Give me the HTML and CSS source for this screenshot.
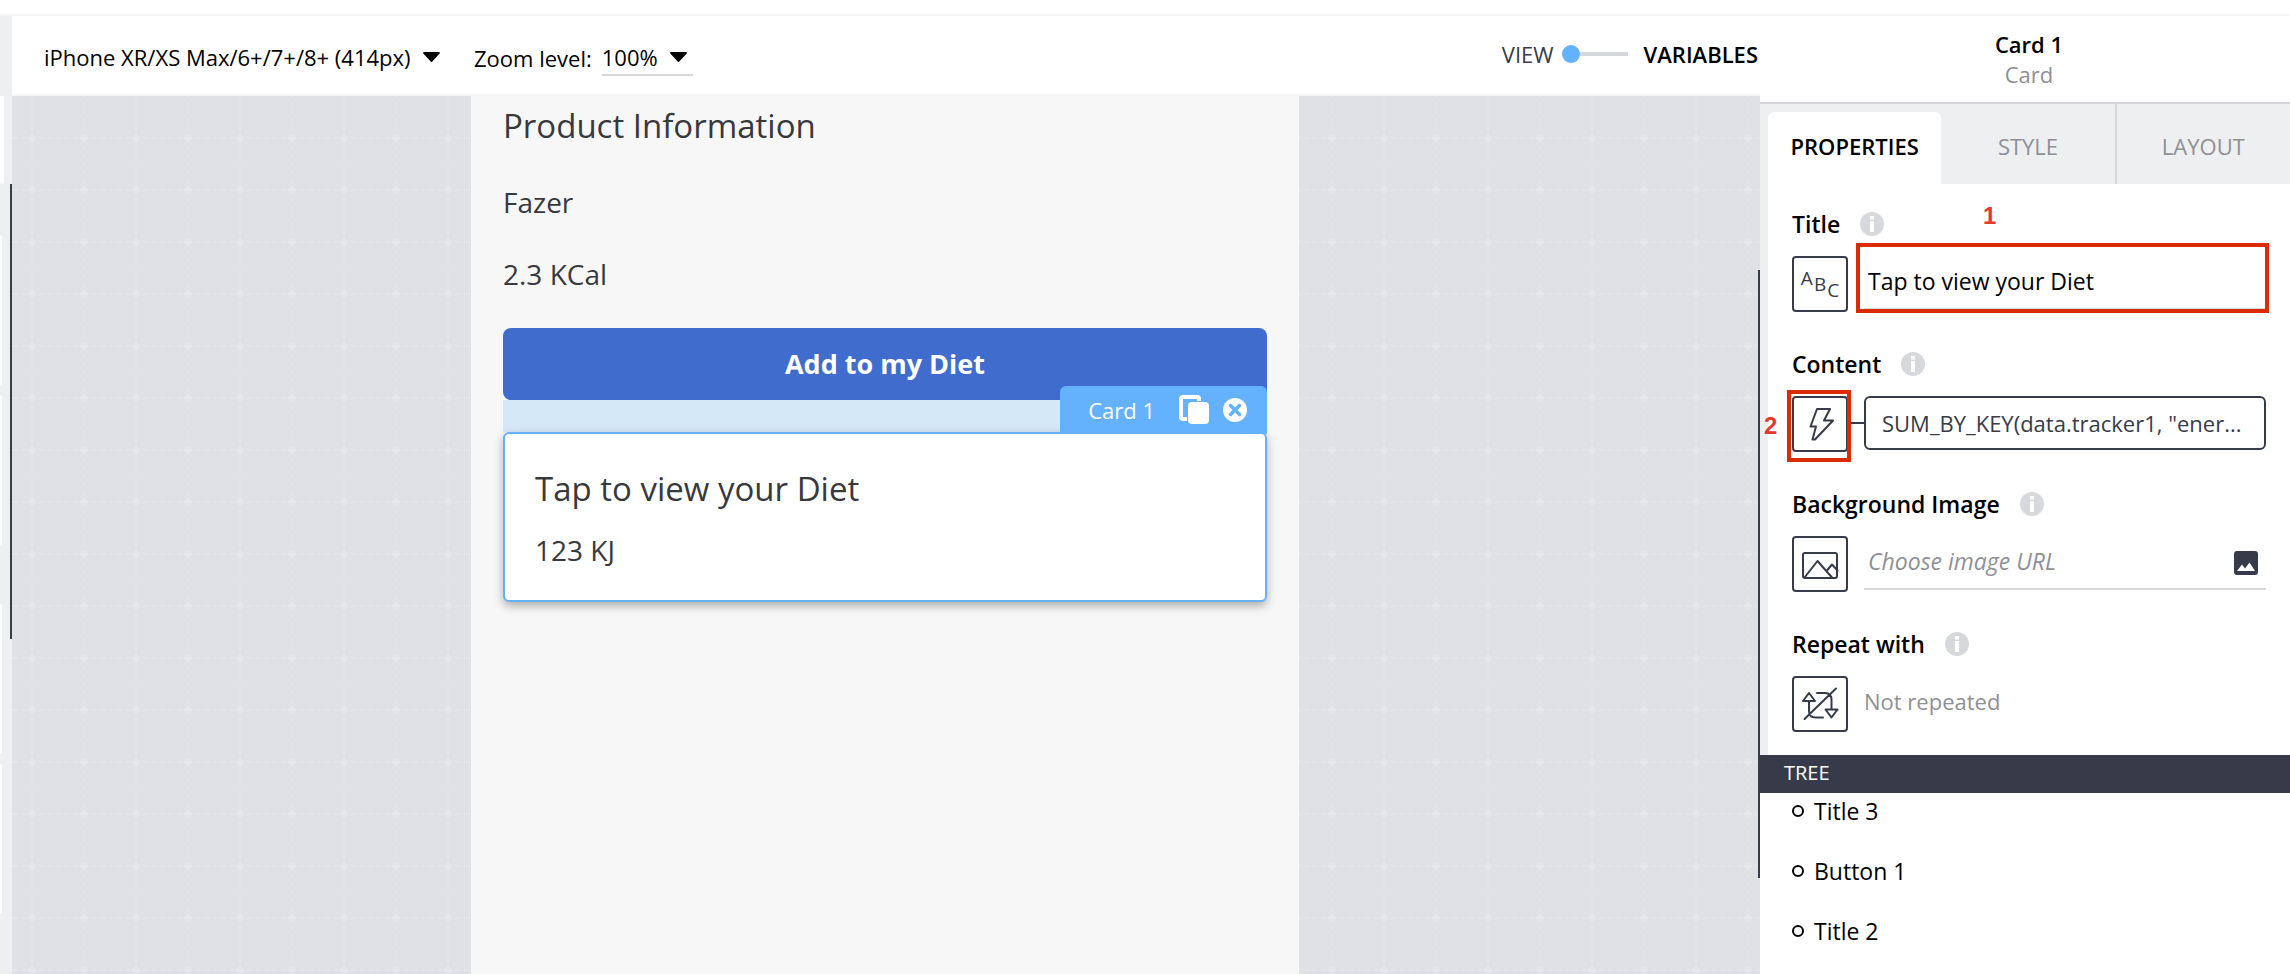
FILE: index.html
```html
<!DOCTYPE html>
<html lang="en">
<head>
<meta charset="utf-8">
<title>App builder – Card 1</title>
<link rel="stylesheet" href="styles.css">
</head>
<body>
<svg class="defs" aria-hidden="true">
  <symbol id="caret" viewBox="0 0 17 10"><path d="M1 0h15a1 1 0 0 1 .7 1.600L9.300 9.500a1 1 0 0 1-1.600 0L.3 1.600A1 1 0 0 1 1 0z"/></symbol>
  <symbol id="info" viewBox="0 0 24 24"><circle cx="12" cy="12" r="12" fill="#d6d8dc"/><path d="M10 4h4v3.500h-4zM10 9h4v11h-4z" fill="#fff"/></symbol>
</svg>
<div class="topline"></div>
<div class="builder">
  <aside class="rail" aria-label="Components">
    <div class="rail-search"></div>
    <div class="rail-list">
      <div class="rail-group"><i class="rail-card"></i><i class="rail-card"></i></div>
      <div class="rail-group"><i class="rail-card"></i><i class="rail-card"></i></div>
    </div>
    <div class="rail-handle"></div>
  </aside>

  <main class="workspace">
    <header class="toolbar">
      <div class="toolbar-left">
        <span class="picker">
          <select class="picker-select" aria-label="Device"><option>iPhone XR/XS Max/6+/7+/8+ (414px)</option></select>
          <svg class="caret"><use href="#caret"/></svg>
        </span>
        <span class="zoom">
          <label for="zoom">Zoom level:</label>
          <span class="picker picker-lined">
            <select class="picker-select" id="zoom"><option>100%</option></select>
            <svg class="caret"><use href="#caret"/></svg>
          </span>
        </span>
      </div>
      <div class="mode">
        <label class="mode-view" for="mode">VIEW</label>
        <input class="mode-switch" id="mode" type="checkbox" role="switch">
        <label class="mode-vars" for="mode">VARIABLES</label>
      </div>
    </header>
    <div class="canvas">
      <svg class="grid" aria-hidden="true">
        <defs>
          <pattern id="cell" width="52" height="52" x="-6" y="16" patternUnits="userSpaceOnUse">
            <path d="M0 26h52" stroke="#e4e5e8" stroke-width="2" stroke-dasharray="6 3" stroke-dashoffset="3"/>
            <path d="M26 0v52" stroke="#e3e4e7" stroke-width="2" stroke-dasharray="5 4" stroke-dashoffset="3"/>
            <path d="M26 22v8M22 26h8" stroke="#e6e7e9" stroke-width="3"/>
          </pattern>
        </defs>
        <rect width="100%" height="100%" fill="url(#cell)"/>
      </svg>
      <section class="phone">
        <h1 class="phone-title">Product Information</h1>
        <p class="phone-text">Fazer</p>
        <p class="phone-text">2.3 KCal</p>
        <button class="phone-button" type="button">Add to my Diet</button>
        <div class="spacer"></div>
        <article class="card">
          <div class="tag">
            <span class="tag-name">Card 1</span>
            <button class="tag-button" type="button" aria-label="Duplicate">
              <svg width="30" height="30" viewBox="0 0 30 30"><rect x="2" y="2" width="18" height="22" rx="2" fill="none" stroke="#fff" stroke-width="4"/><rect x="8" y="6" width="22" height="24" rx="4" fill="#64b1fe"/><rect x="9" y="7" width="21" height="22" rx="4" fill="#fff"/></svg>
            </button>
            <button class="tag-button" type="button" aria-label="Remove">
              <svg width="24" height="24" viewBox="0 0 24 24"><circle cx="12" cy="12" r="12" fill="#fff"/><path d="M7.500 7.500l9 9M16.500 7.500l-9 9" stroke="#64b1fe" stroke-width="3.500" stroke-linecap="round"/></svg>
            </button>
          </div>
          <h2 class="card-title">Tap to view your Diet</h2>
          <p class="card-text">123 KJ</p>
        </article>
      </section>
    </div>
  </main>

  <aside class="panel">
    <header class="panel-head">
      <strong class="panel-name">Card 1</strong>
      <span class="panel-type">Card</span>
    </header>
    <nav class="tabs">
      <button class="tab tab-active" type="button">PROPERTIES</button>
      <button class="tab" type="button">STYLE</button>
      <button class="tab tab-divided" type="button">LAYOUT</button>
    </nav>
    <div class="fields">
      <div class="field">
        <div class="field-head"><label for="f-title">Title</label><svg class="info"><use href="#info"/></svg><b class="mark mark-one">1</b></div>
        <div class="field-row">
          <button class="binding" type="button" aria-label="Text binding"><span class="abc"><span>A</span><span>B</span><span>C</span></span></button>
          <div class="frame-host">
            <input class="text-input" id="f-title" type="text" value="Tap to view your Diet">
            <i class="frame frame-input"></i>
          </div>
        </div>
      </div>
      <div class="field">
        <div class="field-head"><label for="f-content">Content</label><svg class="info"><use href="#info"/></svg></div>
        <div class="field-row field-row-linked">
          <div class="binding-host">
            <button class="binding" type="button" aria-label="Formula binding">
              <svg class="glyph" viewBox="0 0 56 56"><path d="M25 13h13l-6 11.500h9L23 43.500h-2.500L24 30.500h-5.500z"/></svg>
            </button>
            <i class="frame frame-binding"></i>
            <b class="mark mark-two">2</b>
          </div>
          <button class="formula" id="f-content" type="button">SUM_BY_KEY(data.tracker1, "ener...</button>
        </div>
      </div>
      <div class="field">
        <div class="field-head"><label for="f-image">Background Image</label><svg class="info"><use href="#info"/></svg></div>
        <div class="field-row">
          <button class="binding" type="button" aria-label="Image binding">
            <svg class="glyph" viewBox="0 0 56 56"><rect x="11" y="17" width="34" height="25" rx="2"/><path d="M12.500 41.500L25.500 25 40 41.500M34.500 35l5.500-6.500 5.500 6"/></svg>
          </button>
          <div class="image-input">
            <input class="text-input" id="f-image" type="text" placeholder="Choose image URL">
            <button class="image-pick" type="button" aria-label="Pick image">
              <svg width="24" height="24" viewBox="0 0 24 24"><rect width="24" height="24" rx="3" fill="#373b49"/><path d="M3 20l5-6.500 3 4 4.500-6L21 20z" fill="#fff"/></svg>
            </button>
          </div>
        </div>
      </div>
      <div class="field">
        <div class="field-head"><span>Repeat with</span><svg class="info"><use href="#info"/></svg></div>
        <div class="field-row">
          <button class="binding" type="button" aria-label="Repeat binding">
            <svg class="glyph" viewBox="0 0 56 56"><path d="M11 25L17 17l6 8zM17 25v10q0 6.500 6.500 6.500H31M25 17h8q6.500 0 6.500 7v9.500M33.500 33.500h12l-6 8zM12.500 43L44 12.500"/></svg>
          </button>
          <span class="muted">Not repeated</span>
        </div>
      </div>
    </div>
    <section class="tree">
      <h2 class="tree-head">TREE</h2>
      <ul class="tree-list">
        <li class="tree-item">Title 3</li>
        <li class="tree-item">Button 1</li>
        <li class="tree-item">Title 2</li>
      </ul>
    </section>
    <div class="panel-handle"></div>
  </aside>
</div>
</body>
</html>
```
FILE: styles.css
```css
*, *::before, *::after { box-sizing: border-box; }
html, body { height: 100%; }
body {
  margin: 0;
  display: flex;
  flex-direction: column;
  overflow: hidden;
  background: #fff;
  color: #000;
  font: 22px/30px "Open Sans", "Noto Sans", sans-serif;
}
h1, h2, p, ul { margin: 0; padding: 0; font-weight: 400; }
button, input, select { margin: 0; padding: 0; border: 0; background: none; color: inherit; font: inherit; }
svg { display: block; flex: none; }
.defs { position: absolute; width: 0; height: 0; }

.topline { flex: none; height: 16px; border-bottom: 2px solid #f7f7f7; }
.builder { flex: 1; min-height: 0; display: flex; }

/* component rail */
.rail { position: relative; flex: none; width: 12px; padding-top: 80px; background: #eeeff1; }
.rail-search { width: 4px; height: 88px; background: #fff; border-bottom: 2px solid #f7f7f7; }
.rail-list { display: flex; flex-direction: column; gap: 59px; padding-top: 51px; }
.rail-group { display: flex; flex-direction: column; gap: 10px; }
.rail-card { width: 2px; height: 150px; background: #fff; border-radius: 0 2px 2px 0; }
.rail-handle { position: absolute; top: 168px; right: 0; width: 2px; height: 455px; background: #373b49; }

/* toolbar */
.workspace { flex: 1; min-width: 0; display: flex; flex-direction: column; }
.toolbar {
  flex: none;
  display: flex;
  justify-content: space-between;
  align-items: center;
  height: 80px;
  padding: 0 2px 0 32px;
  border-bottom: 2px solid #f7f7f7;
}
.toolbar-left { display: flex; align-items: center; gap: 34px; padding-top: 6px; }
.picker { display: flex; align-items: center; gap: 12px; border-bottom: 2px solid transparent; }
.picker-select { appearance: none; height: 34px; outline: 0; }
.picker-lined { padding-right: 6px; border-color: #d6d7db; }
.zoom { display: flex; align-items: center; gap: 10px; }
.caret { width: 17px; height: 10px; }
.mode { display: flex; align-items: center; padding-bottom: 2px; }
.mode-view { color: #373b49; }
.mode-vars { padding-left: 16px; }
.mode-vars, .panel-name, .tab-active, .field-head { font-weight: 600; }
.mode-switch { appearance: none; display: flex; align-items: center; width: 66px; height: 18px; margin-left: 8px; }
.mode-switch::before { content: ""; width: 18px; height: 18px; border-radius: 50%; background: #64b1fe; }
.mode-switch::after { content: ""; flex: 1; height: 4px; background: #d6d7db; }

/* canvas */
.canvas { position: relative; flex: 1; min-height: 0; display: flex; justify-content: center; padding-right: 2px; background: #e0e1e5; }
.grid { position: absolute; inset: 0; width: 100%; height: 100%; }
.phone {
  position: relative;
  width: 828px;
  max-width: 100%;
  padding: 2px 32px 32px;
  background: #f7f7f7;
  color: #38393d;
  font-size: 28px;
}
.phone-title { padding-bottom: 20px; font-size: 33px; line-height: 56px; }
.phone-text { line-height: 56px; padding-bottom: 16px; }
.phone-text + .phone-text { padding-bottom: 26px; }
.phone-button { display: block; width: 100%; height: 72px; border-radius: 8px; background: #3f6ccd; color: #fff; font-size: 27px; font-weight: 700; }
.spacer { height: 32px; background: #d5e8f7; }
.card {
  position: relative;
  padding: 30px 30px 26px;
  border: 2px solid #64b1fe;
  border-radius: 6px;
  background: #fff;
  box-shadow: 0 4px 10px rgba(0, 0, 0, .3);
}
.card-title { padding-bottom: 12px; font-size: 33px; line-height: 50px; }
.card-text { line-height: 48px; }
.tag {
  position: absolute;
  right: -2px;
  bottom: 100%;
  display: flex;
  align-items: center;
  height: 48px;
  padding: 0 20px 0 28px;
  border-radius: 6px 6px 0 0;
  background: #64b1fe;
  color: #fff;
  font-size: 22px;
}
.tag-name { padding-right: 24px; }
.tag-button + .tag-button { padding-left: 14px; }

/* properties panel */
.panel { position: relative; flex: none; width: 530px; display: flex; flex-direction: column; background: #fff; }
.panel-head {
  flex: none;
  display: flex;
  flex-direction: column;
  align-items: center;
  justify-content: center;
  height: 88px;
  padding-left: 8px;
  border-bottom: 2px solid #d6d7db;
}
.panel-type, .muted { color: #8f9095; }
.tabs { flex: none; display: flex; height: 80px; padding-left: 8px; background: #eeeff1; }
.tab { flex: 1; padding-top: 4px; color: #8f9095; }
.tab-active { margin-top: 8px; padding-bottom: 8px; border-radius: 6px 6px 0 0; background: #fff; color: #000; }
.tab-divided { border-left: 2px solid #d6d7db; }
.fields {
  flex: none;
  display: flex;
  flex-direction: column;
  gap: 40px;
  padding: 28px 24px 23px;
  border-left: 8px solid #eeeff1;
}
.field { display: flex; flex-direction: column; gap: 20px; }
.field-head { position: relative; display: flex; align-items: center; gap: 20px; height: 24px; font-size: 23px; }
.info { width: 24px; height: 24px; }
.field-row { display: flex; gap: 16px; height: 56px; }
.binding { flex: none; display: block; width: 56px; height: 56px; border: 2px solid #373b49; border-radius: 4px; color: #373b49; }
.glyph { width: 56px; height: 56px; margin: -2px; fill: none; stroke: #373b49; stroke-width: 2; stroke-linejoin: round; stroke-linecap: round; }
.abc { display: flex; justify-content: center; gap: 1px; font-size: 19px; line-height: 20px; }
.abc span:nth-child(1) { padding-bottom: 12px; }
.abc span:nth-child(2) { padding-top: 6px; }
.abc span:nth-child(3) { padding-top: 12px; }
.frame-host { position: relative; flex: 1; display: flex; }
.text-input { flex: 1; min-width: 0; height: 54px; padding: 0 4px 3px; border-bottom: 2px solid #d6d7db; outline: 0; font-size: 23px; }
.text-input::placeholder { color: #8f9095; font-style: italic; opacity: 1; }
.image-input { position: relative; flex: 1; display: flex; }
.image-pick { position: absolute; top: 15px; right: 8px; }
.binding-host { position: relative; }
.field-row-linked { gap: 0; }
.field-row-linked::after { content: ""; order: 1; width: 16px; height: 2px; margin-top: 26px; background: #373b49; }
.formula {
  order: 2;
  flex: 1;
  min-width: 0;
  height: 54px;
  padding: 0 16px;
  border: 2px solid #373b49;
  border-radius: 6px;
  color: #373b49;
  text-align: left;
  white-space: nowrap;
}
.muted { line-height: 50px; }
.frame { position: absolute; border: 4px solid #db2b05; pointer-events: none; }
.frame-input { inset: -13px -3px -1px -8px; }
.frame-binding { inset: -6px -3px -10px -5px; }
.mark { position: absolute; color: #e23a33; font: 700 24px/24px "Liberation Sans", sans-serif; }
.mark-one { left: 191px; top: -8px; }
.mark-two { left: -28px; top: 18px; }

/* tree */
.tree { flex: 1; min-height: 0; overflow: hidden; }
.tree-head { height: 38px; padding-left: 24px; background: #373b49; color: #fff; font-size: 20px; line-height: 36px; }
.tree-list { display: flex; flex-direction: column; gap: 24px; padding-left: 32px; list-style: none; font-size: 23px; }
.tree-item { display: flex; align-items: center; gap: 10px; height: 36px; line-height: 34px; }
.tree-item::before { content: ""; width: 12px; height: 12px; border: 2px solid #000; border-radius: 50%; }
.panel-handle { position: absolute; top: 254px; left: -2px; width: 2px; height: 608px; background: #373b49; }
```
